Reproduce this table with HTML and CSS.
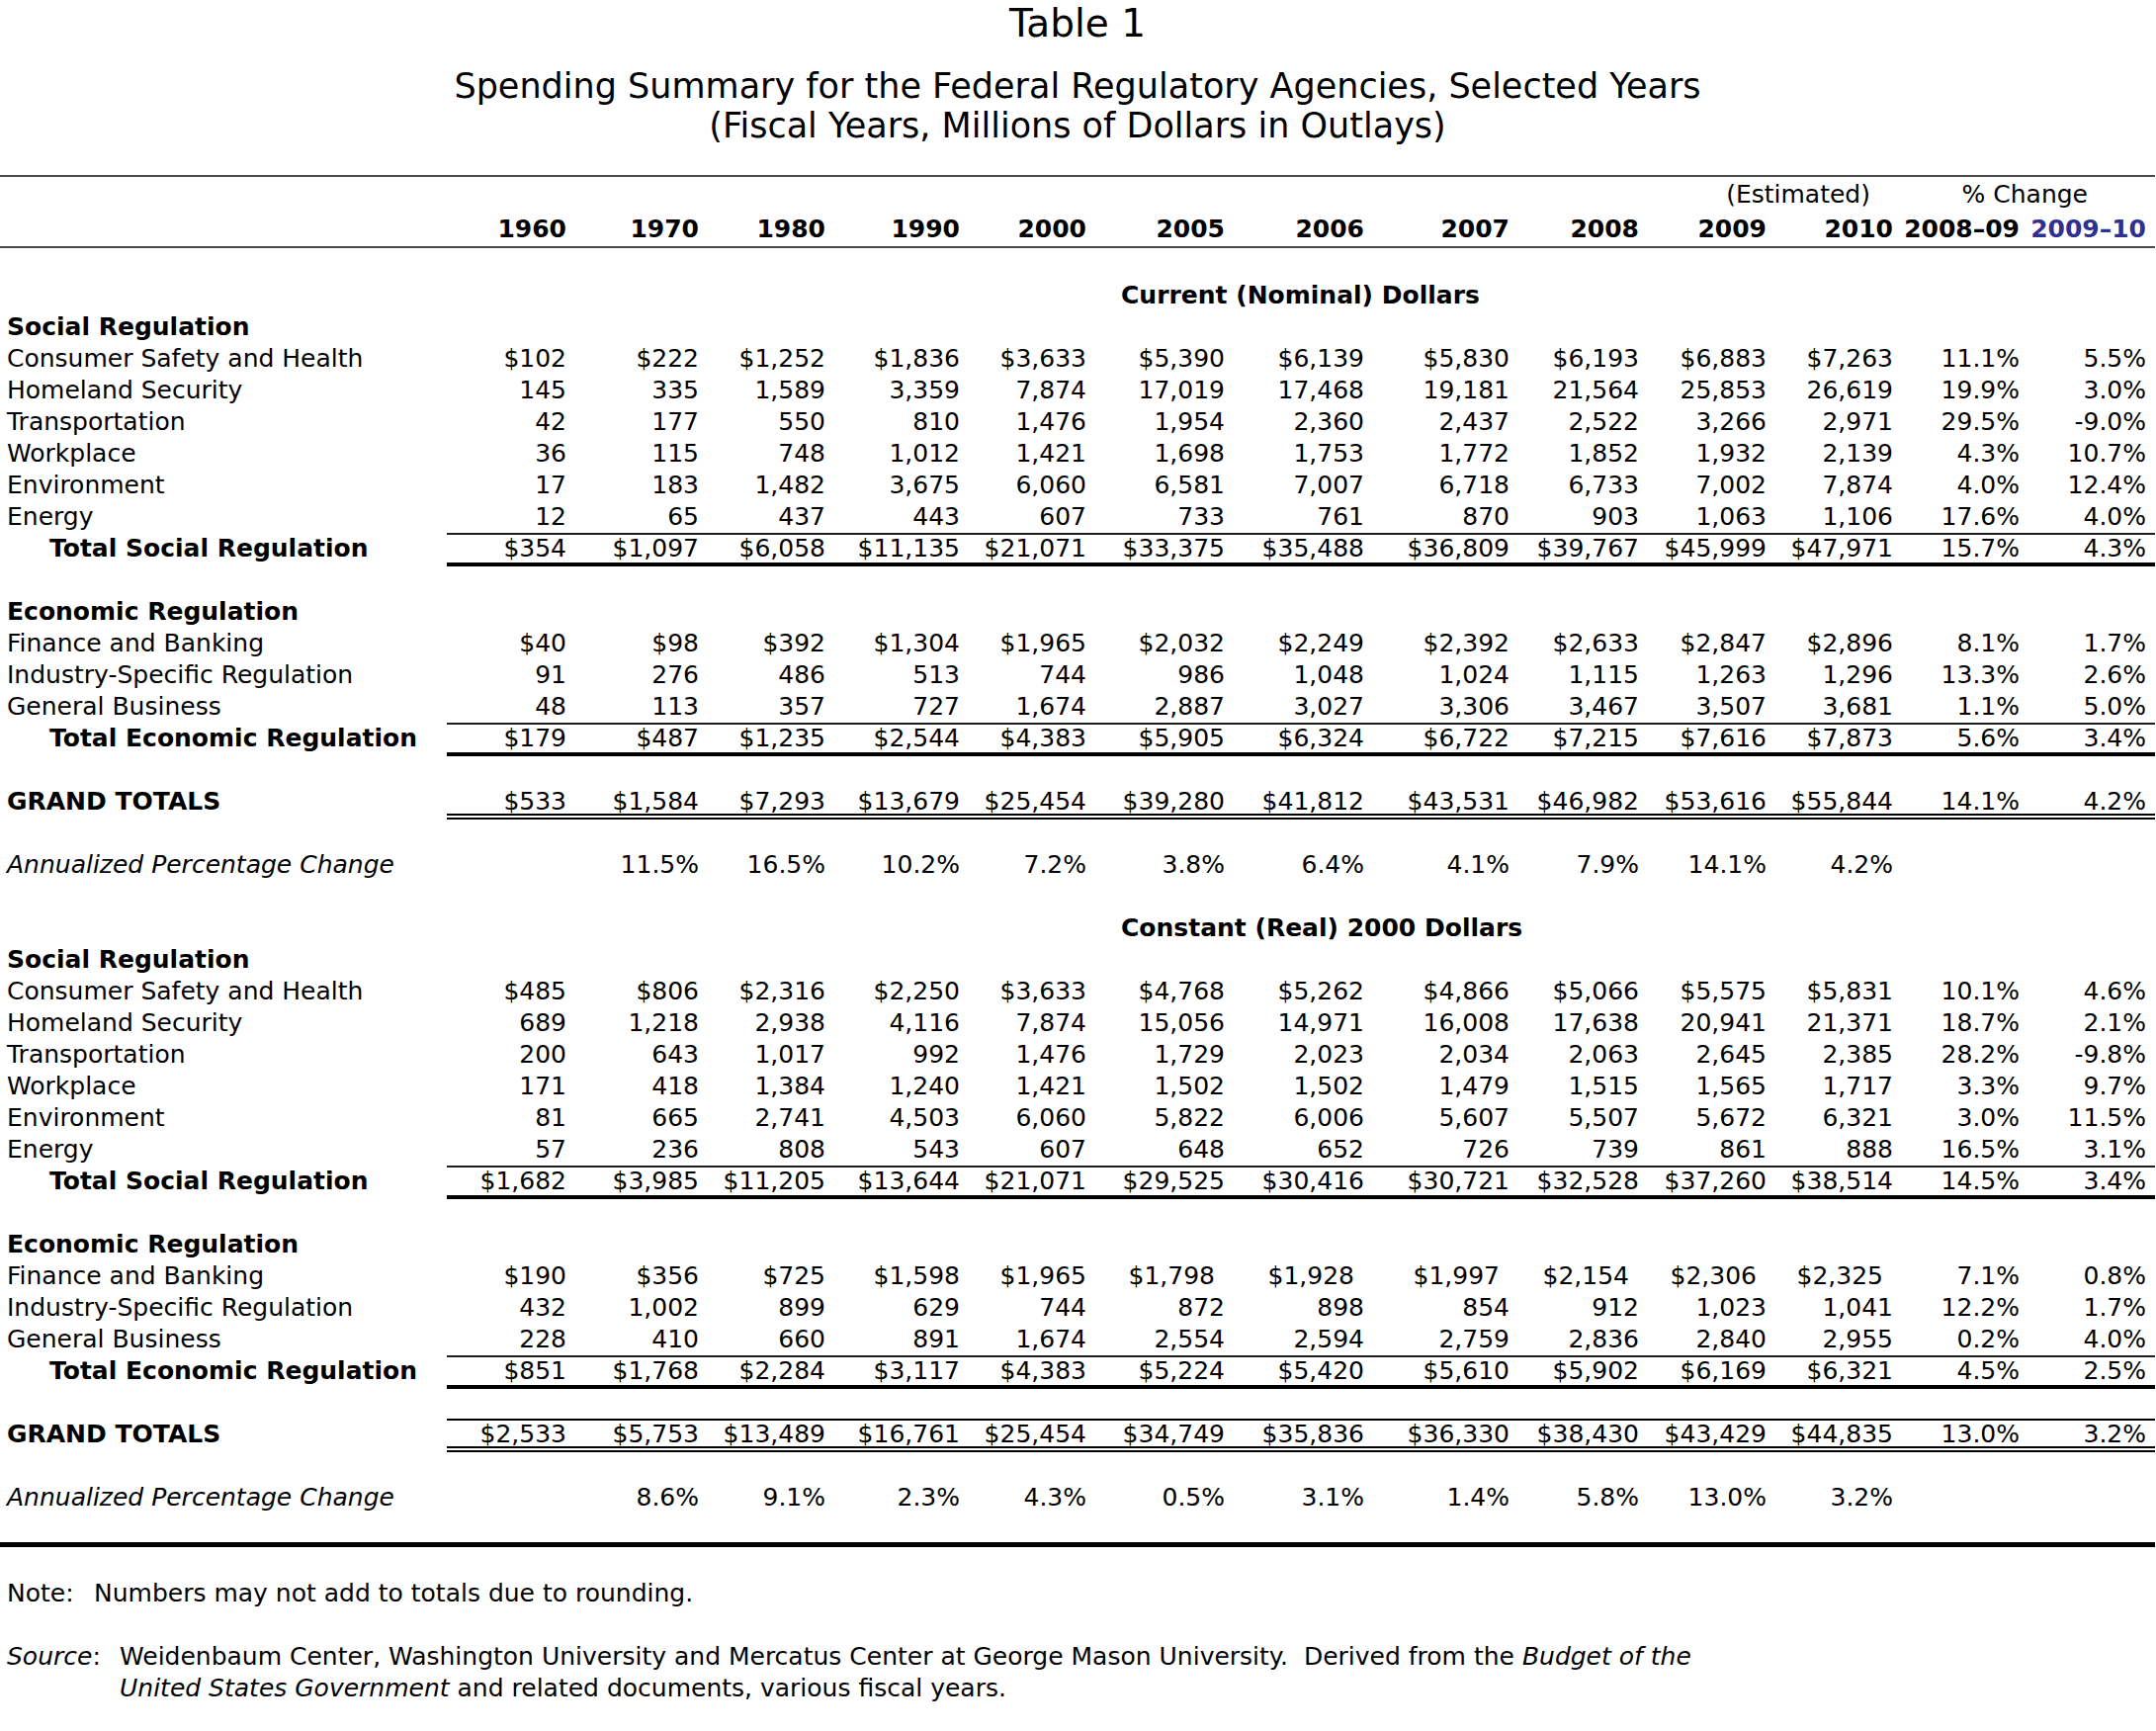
FILE: index.html
```html
<!DOCTYPE html>
<html lang="en">
<head>
<meta charset="utf-8">
<title>Table 1</title>
<link rel="stylesheet" href="styles.css">
</head>
<body>
<div class="page">
  <h1 class="title">Table 1</h1>
  <h2 class="subtitle">Spending Summary for the Federal Regulatory Agencies, Selected Years<br>(Fiscal Years, Millions of Dollars in Outlays)</h2>

  <div class="table">
    <div class="rule"></div>
    <div class="row head">
      <div class="label"></div>
      <div class="cells">
        <span class="est">(Estimated)</span>
        <span class="chg">% Change</span>
      </div>
    </div>
    <div class="row head">
      <div class="label"></div>
      <div class="cells years">
        <span>1960</span><span>1970</span><span>1980</span><span>1990</span><span>2000</span><span>2005</span><span>2006</span><span>2007</span><span>2008</span><span>2009</span><span>2010</span><span>2008–09</span><span class="blue">2009–10</span>
      </div>
    </div>
    <div class="rule"></div>

    <div class="row"></div>
    <div class="row">
      <div class="label"></div>
      <div class="cells"><span class="section">Current (Nominal) Dollars</span></div>
    </div>
    <div class="row"><div class="label bold">Social Regulation</div><div class="cells"></div></div>
    <div class="row"><div class="label">Consumer Safety and Health</div><div class="cells"><span>$102</span><span>$222</span><span>$1,252</span><span>$1,836</span><span>$3,633</span><span>$5,390</span><span>$6,139</span><span>$5,830</span><span>$6,193</span><span>$6,883</span><span>$7,263</span><span>11.1%</span><span>5.5%</span></div></div>
    <div class="row"><div class="label">Homeland Security</div><div class="cells"><span>145</span><span>335</span><span>1,589</span><span>3,359</span><span>7,874</span><span>17,019</span><span>17,468</span><span>19,181</span><span>21,564</span><span>25,853</span><span>26,619</span><span>19.9%</span><span>3.0%</span></div></div>
    <div class="row"><div class="label">Transportation</div><div class="cells"><span>42</span><span>177</span><span>550</span><span>810</span><span>1,476</span><span>1,954</span><span>2,360</span><span>2,437</span><span>2,522</span><span>3,266</span><span>2,971</span><span>29.5%</span><span>-9.0%</span></div></div>
    <div class="row"><div class="label">Workplace</div><div class="cells"><span>36</span><span>115</span><span>748</span><span>1,012</span><span>1,421</span><span>1,698</span><span>1,753</span><span>1,772</span><span>1,852</span><span>1,932</span><span>2,139</span><span>4.3%</span><span>10.7%</span></div></div>
    <div class="row"><div class="label">Environment</div><div class="cells"><span>17</span><span>183</span><span>1,482</span><span>3,675</span><span>6,060</span><span>6,581</span><span>7,007</span><span>6,718</span><span>6,733</span><span>7,002</span><span>7,874</span><span>4.0%</span><span>12.4%</span></div></div>
    <div class="row"><div class="label">Energy</div><div class="cells"><span>12</span><span>65</span><span>437</span><span>443</span><span>607</span><span>733</span><span>761</span><span>870</span><span>903</span><span>1,063</span><span>1,106</span><span>17.6%</span><span>4.0%</span></div></div>
    <div class="row"><div class="label total">Total Social Regulation</div><div class="cells subtotal"><span>$354</span><span>$1,097</span><span>$6,058</span><span>$11,135</span><span>$21,071</span><span>$33,375</span><span>$35,488</span><span>$36,809</span><span>$39,767</span><span>$45,999</span><span>$47,971</span><span>15.7%</span><span>4.3%</span></div></div>

    <div class="row"></div>
    <div class="row"><div class="label bold">Economic Regulation</div><div class="cells"></div></div>
    <div class="row"><div class="label">Finance and Banking</div><div class="cells"><span>$40</span><span>$98</span><span>$392</span><span>$1,304</span><span>$1,965</span><span>$2,032</span><span>$2,249</span><span>$2,392</span><span>$2,633</span><span>$2,847</span><span>$2,896</span><span>8.1%</span><span>1.7%</span></div></div>
    <div class="row"><div class="label">Industry-Specific Regulation</div><div class="cells"><span>91</span><span>276</span><span>486</span><span>513</span><span>744</span><span>986</span><span>1,048</span><span>1,024</span><span>1,115</span><span>1,263</span><span>1,296</span><span>13.3%</span><span>2.6%</span></div></div>
    <div class="row"><div class="label">General Business</div><div class="cells"><span>48</span><span>113</span><span>357</span><span>727</span><span>1,674</span><span>2,887</span><span>3,027</span><span>3,306</span><span>3,467</span><span>3,507</span><span>3,681</span><span>1.1%</span><span>5.0%</span></div></div>
    <div class="row"><div class="label total">Total Economic Regulation</div><div class="cells subtotal"><span>$179</span><span>$487</span><span>$1,235</span><span>$2,544</span><span>$4,383</span><span>$5,905</span><span>$6,324</span><span>$6,722</span><span>$7,215</span><span>$7,616</span><span>$7,873</span><span>5.6%</span><span>3.4%</span></div></div>

    <div class="row"></div>
    <div class="row"><div class="label bold">GRAND TOTALS</div><div class="cells grand"><span>$533</span><span>$1,584</span><span>$7,293</span><span>$13,679</span><span>$25,454</span><span>$39,280</span><span>$41,812</span><span>$43,531</span><span>$46,982</span><span>$53,616</span><span>$55,844</span><span>14.1%</span><span>4.2%</span></div></div>
    <div class="row"></div>
    <div class="row"><div class="label italic">Annualized Percentage Change</div><div class="cells"><span></span><span>11.5%</span><span>16.5%</span><span>10.2%</span><span>7.2%</span><span>3.8%</span><span>6.4%</span><span>4.1%</span><span>7.9%</span><span>14.1%</span><span>4.2%</span><span></span><span></span></div></div>

    <div class="row"></div>
    <div class="row">
      <div class="label"></div>
      <div class="cells"><span class="section">Constant (Real) 2000 Dollars</span></div>
    </div>
    <div class="row"><div class="label bold">Social Regulation</div><div class="cells"></div></div>
    <div class="row"><div class="label">Consumer Safety and Health</div><div class="cells"><span>$485</span><span>$806</span><span>$2,316</span><span>$2,250</span><span>$3,633</span><span>$4,768</span><span>$5,262</span><span>$4,866</span><span>$5,066</span><span>$5,575</span><span>$5,831</span><span>10.1%</span><span>4.6%</span></div></div>
    <div class="row"><div class="label">Homeland Security</div><div class="cells"><span>689</span><span>1,218</span><span>2,938</span><span>4,116</span><span>7,874</span><span>15,056</span><span>14,971</span><span>16,008</span><span>17,638</span><span>20,941</span><span>21,371</span><span>18.7%</span><span>2.1%</span></div></div>
    <div class="row"><div class="label">Transportation</div><div class="cells"><span>200</span><span>643</span><span>1,017</span><span>992</span><span>1,476</span><span>1,729</span><span>2,023</span><span>2,034</span><span>2,063</span><span>2,645</span><span>2,385</span><span>28.2%</span><span>-9.8%</span></div></div>
    <div class="row"><div class="label">Workplace</div><div class="cells"><span>171</span><span>418</span><span>1,384</span><span>1,240</span><span>1,421</span><span>1,502</span><span>1,502</span><span>1,479</span><span>1,515</span><span>1,565</span><span>1,717</span><span>3.3%</span><span>9.7%</span></div></div>
    <div class="row"><div class="label">Environment</div><div class="cells"><span>81</span><span>665</span><span>2,741</span><span>4,503</span><span>6,060</span><span>5,822</span><span>6,006</span><span>5,607</span><span>5,507</span><span>5,672</span><span>6,321</span><span>3.0%</span><span>11.5%</span></div></div>
    <div class="row"><div class="label">Energy</div><div class="cells"><span>57</span><span>236</span><span>808</span><span>543</span><span>607</span><span>648</span><span>652</span><span>726</span><span>739</span><span>861</span><span>888</span><span>16.5%</span><span>3.1%</span></div></div>
    <div class="row"><div class="label total">Total Social Regulation</div><div class="cells subtotal"><span>$1,682</span><span>$3,985</span><span>$11,205</span><span>$13,644</span><span>$21,071</span><span>$29,525</span><span>$30,416</span><span>$30,721</span><span>$32,528</span><span>$37,260</span><span>$38,514</span><span>14.5%</span><span>3.4%</span></div></div>

    <div class="row"></div>
    <div class="row"><div class="label bold">Economic Regulation</div><div class="cells"></div></div>
    <div class="row"><div class="label">Finance and Banking</div><div class="cells"><span>$190</span><span>$356</span><span>$725</span><span>$1,598</span><span>$1,965</span><span class="nudge">$1,798</span><span class="nudge">$1,928</span><span class="nudge">$1,997</span><span class="nudge">$2,154</span><span class="nudge">$2,306</span><span class="nudge">$2,325</span><span>7.1%</span><span>0.8%</span></div></div>
    <div class="row"><div class="label">Industry-Specific Regulation</div><div class="cells"><span>432</span><span>1,002</span><span>899</span><span>629</span><span>744</span><span>872</span><span>898</span><span>854</span><span>912</span><span>1,023</span><span>1,041</span><span>12.2%</span><span>1.7%</span></div></div>
    <div class="row"><div class="label">General Business</div><div class="cells"><span>228</span><span>410</span><span>660</span><span>891</span><span>1,674</span><span>2,554</span><span>2,594</span><span>2,759</span><span>2,836</span><span>2,840</span><span>2,955</span><span>0.2%</span><span>4.0%</span></div></div>
    <div class="row"><div class="label total">Total Economic Regulation</div><div class="cells subtotal"><span>$851</span><span>$1,768</span><span>$2,284</span><span>$3,117</span><span>$4,383</span><span>$5,224</span><span>$5,420</span><span>$5,610</span><span>$5,902</span><span>$6,169</span><span>$6,321</span><span>4.5%</span><span>2.5%</span></div></div>

    <div class="row"></div>
    <div class="row"><div class="label bold">GRAND TOTALS</div><div class="cells grand ruled"><span>$2,533</span><span>$5,753</span><span>$13,489</span><span>$16,761</span><span>$25,454</span><span>$34,749</span><span>$35,836</span><span>$36,330</span><span>$38,430</span><span>$43,429</span><span>$44,835</span><span>13.0%</span><span>3.2%</span></div></div>
    <div class="row"></div>
    <div class="row"><div class="label italic">Annualized Percentage Change</div><div class="cells"><span></span><span>8.6%</span><span>9.1%</span><span>2.3%</span><span>4.3%</span><span>0.5%</span><span>3.1%</span><span>1.4%</span><span>5.8%</span><span>13.0%</span><span>3.2%</span><span></span><span></span></div></div>

    <div class="end-gap"></div>
    <div class="rule-heavy"></div>
  </div>

  <div class="notes">
    <p class="note"><span class="note-label">Note:</span>Numbers may not add to totals due to rounding.</p>
    <div class="source">
      <span class="source-label"><em>Source</em>:</span>
      <span class="source-text">Weidenbaum Center, Washington University and Mercatus Center at George Mason University.&nbsp; Derived from the <em>Budget of the</em><br><em>United States Government</em> and related documents, various fiscal years.</span>
    </div>
  </div>
</div>
</body>
</html>
```

FILE: styles.css
```css
html, body {
  margin: 0;
  padding: 0;
  background: #ffffff;
}

body {
  color: #000000;
  font-family: "DejaVu Sans", Verdana, sans-serif;
}

.page {
  width: 2180px;
}

.title {
  margin: 0;
  font-size: 39px;
  font-weight: normal;
  line-height: 48px;
  text-align: center;
}

.subtitle {
  margin: 19px 0 0;
  font-size: 35px;
  font-weight: normal;
  line-height: 40px;
  text-align: center;
}

.table {
  margin-top: 30px;
  font-size: 25px;
}

.rule {
  height: 2px;
  background: #4a4a4a;
}

.row {
  display: grid;
  grid-template-columns: 452px 1728px;
  height: 32px;
  line-height: 32px;
}

.row.head {
  height: 35px;
  line-height: 35px;
}

.label {
  padding-left: 7px;
  white-space: nowrap;
}

.label.bold {
  font-weight: bold;
}

.label.total {
  padding-left: 50px;
  font-weight: bold;
}

.label.italic {
  font-style: italic;
}

.cells {
  display: grid;
  grid-template-columns: 121px 134px 128px 136px 128px 140px 141px 147px 131px 129px 128px 128px 128px;
  padding-right: 9px;
  text-align: right;
  white-space: nowrap;
}

.years {
  font-weight: bold;
}

.blue {
  color: #2e3192;
}

.est {
  grid-column: 10 / 12;
  padding-right: 23px;
}

.chg {
  grid-column: 12 / 14;
  padding-right: 59px;
}

.section {
  grid-column: 6 / -1;
  padding-left: 35px;
  text-align: left;
  font-weight: bold;
}

.nudge {
  padding-right: 10px;
}

.cells.subtotal {
  box-shadow: inset 0 2px 0 #1e1e1e, inset 0 -2px 0 #000000, 0 2px 0 #000000;
}

.cells.grand {
  box-shadow: inset 0 -2px 0 #ffffff, inset 0 -4px 0 #000000, 0 2px 0 #000000;
}

.cells.grand.ruled {
  box-shadow: inset 0 2px 0 #000000, inset 0 -2px 0 #ffffff, inset 0 -4px 0 #000000, 0 2px 0 #000000;
}

.end-gap {
  height: 29px;
}

.rule-heavy {
  height: 5px;
  background: #000000;
}

.notes {
  margin-top: 31px;
  font-size: 25px;
  line-height: 32px;
}

.note {
  margin: 0;
  padding-left: 7px;
}

.note-label {
  display: inline-block;
  width: 88px;
}

.source {
  display: grid;
  grid-template-columns: 114px auto;
  margin-top: 32px;
  padding-left: 7px;
}

.source-text {
  white-space: nowrap;
}
```
